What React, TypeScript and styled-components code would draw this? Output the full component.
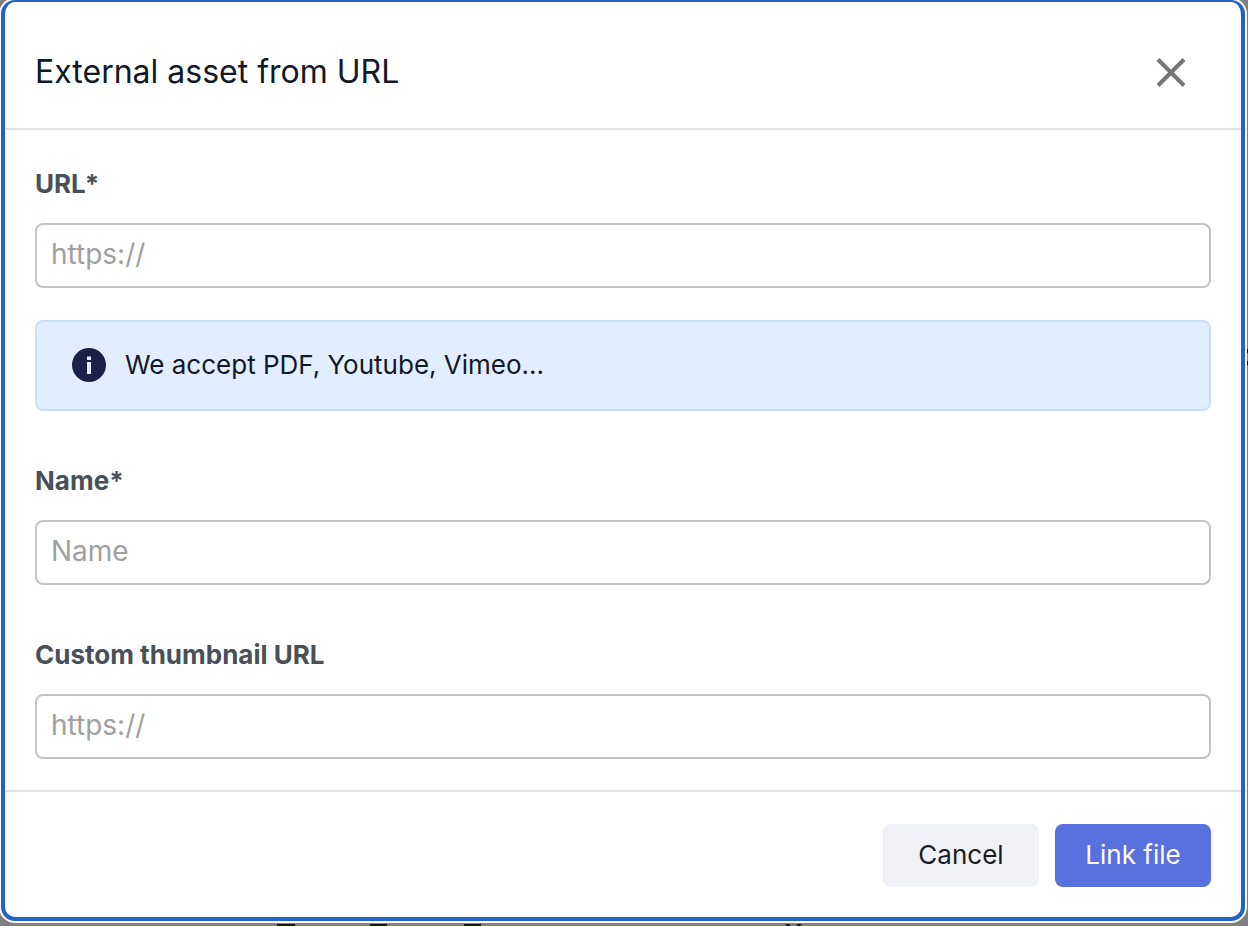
import React from 'react';
import styled, { createGlobalStyle } from 'styled-components';

const GlobalStyle = createGlobalStyle`
  *, *::before, *::after { box-sizing: border-box; }
  body {
    margin: 0;
    background: #808080;
    font-family: Inter, "Liberation Sans", sans-serif;
    font-size: 26px;
    line-height: 40px;
    color: #111827;
  }
  button, input { font: inherit; }
`;

const Backdrop = styled.div`
  position: relative;
  min-height: 100vh;
  padding: 0 3px 5px 1px;
  background: #808080;
  overflow: hidden;
`;

const Dialog = styled.section`
  background: #fff;
  border: 4px solid #2463c7;
  border-top-width: 2px;
  border-radius: 14px;
  box-shadow: 0 0 0 2px #fff;
`;

const Header = styled.header`
  display: flex;
  align-items: center;
  justify-content: space-between;
  padding: 40px 40px 26px 30px;
  border-bottom: 2px solid #e2e2e2;
`;

const Title = styled.h2`
  margin: 0;
  font-size: 32px;
  font-weight: 400;
`;

const CloseButton = styled.button`
  display: grid;
  place-items: center;
  width: 60px;
  height: 60px;
  padding: 0;
  border: 0;
  background: none;
  color: #757575;
`;

const Body = styled.div`
  display: flex;
  flex-direction: column;
  gap: 50px;
  padding: 34px 30px 31px;
`;

const Group = styled.div`
  display: flex;
  flex-direction: column;
  gap: 32px;
`;

const Field = styled.div`
  display: flex;
  flex-direction: column;
  gap: 19px;
`;

const Label = styled.label`
  font-weight: 700;
  color: #495057;
`;

const Input = styled.input`
  width: 100%;
  height: 65px;
  padding: 0 14px 3px;
  border: 2px solid #c4c4c4;
  border-radius: 8px;
  background: #fff;
  color: #111827;
  font-size: 28px;
  &::placeholder { color: #a0a0a0; opacity: 1; }
`;

const Notice = styled.div`
  display: flex;
  align-items: center;
  gap: 19px;
  height: 91px;
  padding: 0 35px 1px;
  border: 2px solid #cbdffb;
  border-radius: 8px;
  background: #e2eeff;
`;

const Footer = styled.footer`
  display: flex;
  justify-content: flex-end;
  gap: 16px;
  padding: 32px 30px 30px;
  border-top: 2px solid #e2e2e2;
`;

const Button = styled.button<{ $primary?: boolean }>`
  min-width: 156px;
  height: 63px;
  padding: 0 30px 2px;
  border: 0;
  border-radius: 8px;
  background: ${p => (p.$primary ? '#5970df' : '#f0f1f7')};
  color: ${p => (p.$primary ? '#fff' : '#1c1c1c')};
`;

const PageBottom = styled.svg`
  position: absolute;
  left: 0;
  bottom: 0;
`;

const PageSide = styled.svg`
  position: absolute;
  right: 0;
  top: 349px;
`;

export default function App() {
  return (
    <>
      <GlobalStyle />
      <Backdrop>
        <Dialog role="dialog" aria-labelledby="dialog-title">
          <Header>
            <Title id="dialog-title">External asset from URL</Title>
            <CloseButton type="button" aria-label="Close">
              <svg width="30" height="30" viewBox="0 0 30 30" fill="none" stroke="currentColor" strokeWidth="4">
                <path d="M2 2.5 28 28.5M28 2.5 2 28.5" />
              </svg>
            </CloseButton>
          </Header>
          <Body>
            <Group>
              <Field>
                <Label htmlFor="url">URL*</Label>
                <Input id="url" type="url" placeholder="https://" required />
              </Field>
              <Notice>
                <svg width="34" height="34" viewBox="0 0 34 34" aria-hidden="true">
                  <circle cx="17" cy="17" r="17" fill="#1b2149" />
                  <path d="M15 8.5h4v3.4h-4zM15 14h4v12h-4z" fill="#e2eeff" />
                </svg>
                <span>We accept PDF, Youtube, Vimeo...</span>
              </Notice>
            </Group>
            <Field>
              <Label htmlFor="name">Name*</Label>
              <Input id="name" type="text" placeholder="Name" required />
            </Field>
            <Field>
              <Label htmlFor="thumbnail">Custom thumbnail URL</Label>
              <Input id="thumbnail" type="url" placeholder="https://" />
            </Field>
          </Body>
          <Footer>
            <Button type="button">Cancel</Button>
            <Button type="button" $primary>Link file</Button>
          </Footer>
        </Dialog>
        <PageBottom width="810" height="3" aria-hidden="true">
          <path d="M277 1h18v2h-18zM370 1h17v2h-17zM464 1h17v2h-17zM785 1h4l2 2h-4zM798 1h4l-2 2h-4z" fill="#16160f" />
        </PageBottom>
        <PageSide width="1" height="16" aria-hidden="true">
          <path d="M0 0h1v4h-1zM0 12h1v4h-1z" fill="#16160f" />
        </PageSide>
      </Backdrop>
    </>
  );
}
